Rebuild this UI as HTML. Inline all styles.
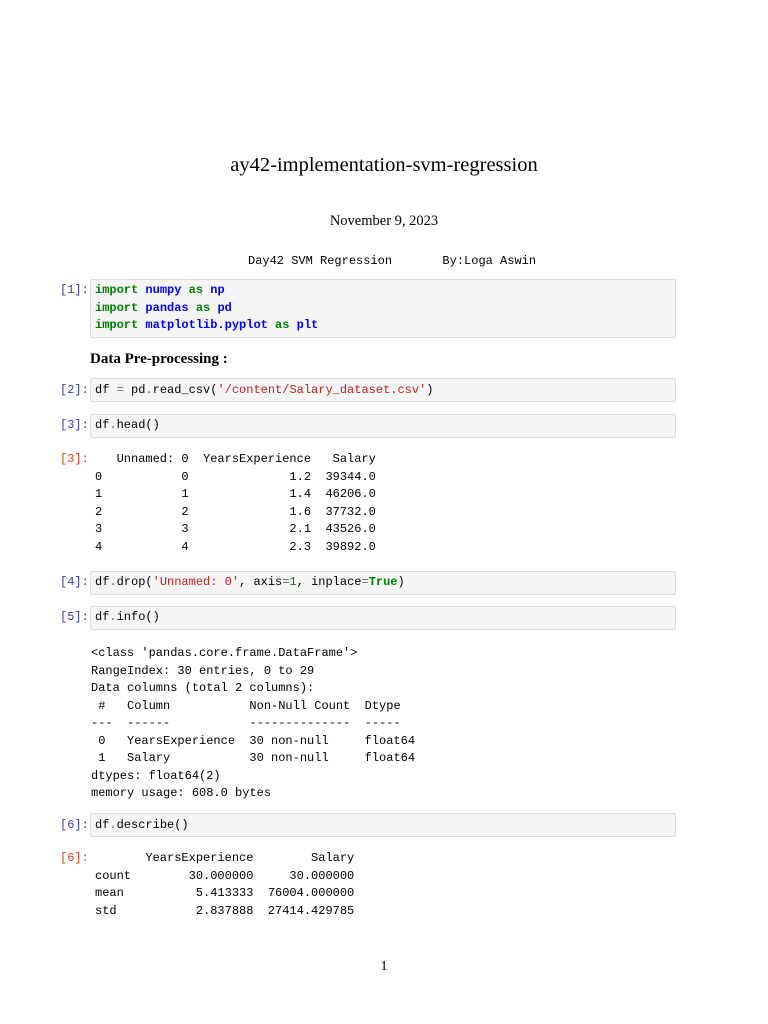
<!DOCTYPE html>
<html><head><meta charset="utf-8"><style>
html,body{margin:0;padding:0;background:#fff;width:768px;height:1024px;overflow:hidden;position:relative}
.m{position:absolute;font-family:"Liberation Mono",monospace;font-size:12px;line-height:17.5px;white-space:pre;color:#000;margin:0}
.s{position:absolute;font-family:"Liberation Serif",serif;color:#000;white-space:nowrap}
.box{position:absolute;left:90px;width:586px;background:#f5f5f5;border:1px solid #dcdcdc;border-radius:2px;box-sizing:border-box}
.pi{color:#303f9f}.po{color:#d84315}
.k{color:#008000;font-weight:bold}.n{color:#0000ff;font-weight:bold}.st{color:#ba2121}.g{color:#008000}.o{color:#666}
</style></head><body>
<div class="s" style="left:0;width:768px;text-align:center;top:154px;font-size:20.5px">ay42-implementation-svm-regression</div>
<div class="s" style="left:0;width:768px;text-align:center;top:213px;font-size:14.5px">November 9, 2023</div>
<div class="m" style="left:248px;top:253px">Day42 SVM Regression       By:Loga Aswin</div>

<div class="box" style="top:279px;height:59px"></div>
<div class="m pi" style="left:60px;top:282px">[1]:</div>
<div class="m" style="left:95px;top:282px"><span class="k">import</span> <span class="n">numpy</span> <span class="k">as</span> <span class="n">np</span>
<span class="k">import</span> <span class="n">pandas</span> <span class="k">as</span> <span class="n">pd</span>
<span class="k">import</span> <span class="n">matplotlib.pyplot</span> <span class="k">as</span> <span class="n">plt</span></div>

<div class="s" style="left:90px;top:351px;font-size:15px;font-weight:bold">Data Pre-processing :</div>

<div class="box" style="top:378px;height:24px"></div>
<div class="m pi" style="left:60px;top:382px">[2]:</div>
<div class="m" style="left:95px;top:382px">df <span class="o">=</span> pd<span class="o">.</span>read_csv(<span class="st">'/content/Salary_dataset.csv'</span>)</div>

<div class="box" style="top:414px;height:24px"></div>
<div class="m pi" style="left:60px;top:417px">[3]:</div>
<div class="m" style="left:95px;top:417px">df<span class="o">.</span>head()</div>

<div class="m po" style="left:60px;top:451px">[3]:</div>
<div class="m" style="left:95px;top:451px">   Unnamed: 0  YearsExperience   Salary
0           0              1.2  39344.0
1           1              1.4  46206.0
2           2              1.6  37732.0
3           3              2.1  43526.0
4           4              2.3  39892.0</div>

<div class="box" style="top:571px;height:24px"></div>
<div class="m pi" style="left:60px;top:574px">[4]:</div>
<div class="m" style="left:95px;top:574px">df<span class="o">.</span>drop(<span class="st">'Unnamed: 0'</span>, axis<span class="o">=</span><span class="g">1</span>, inplace<span class="o">=</span><span class="k">True</span>)</div>

<div class="box" style="top:606px;height:24px"></div>
<div class="m pi" style="left:60px;top:609px">[5]:</div>
<div class="m" style="left:95px;top:609px">df<span class="o">.</span>info()</div>

<div class="m" style="left:91px;top:645px">&lt;class 'pandas.core.frame.DataFrame'&gt;
RangeIndex: 30 entries, 0 to 29
Data columns (total 2 columns):
 #   Column           Non-Null Count  Dtype  
---  ------           --------------  -----  
 0   YearsExperience  30 non-null     float64
 1   Salary           30 non-null     float64
dtypes: float64(2)
memory usage: 608.0 bytes</div>

<div class="box" style="top:813px;height:24px"></div>
<div class="m pi" style="left:60px;top:817px">[6]:</div>
<div class="m" style="left:95px;top:817px">df<span class="o">.</span>describe()</div>

<div class="m po" style="left:60px;top:850px">[6]:</div>
<div class="m" style="left:95px;top:850px">       YearsExperience        Salary
count        30.000000     30.000000
mean          5.413333  76004.000000
std           2.837888  27414.429785</div>

<div class="s" style="left:0;width:768px;text-align:center;top:959px;font-size:14px">1</div>
</body></html>
